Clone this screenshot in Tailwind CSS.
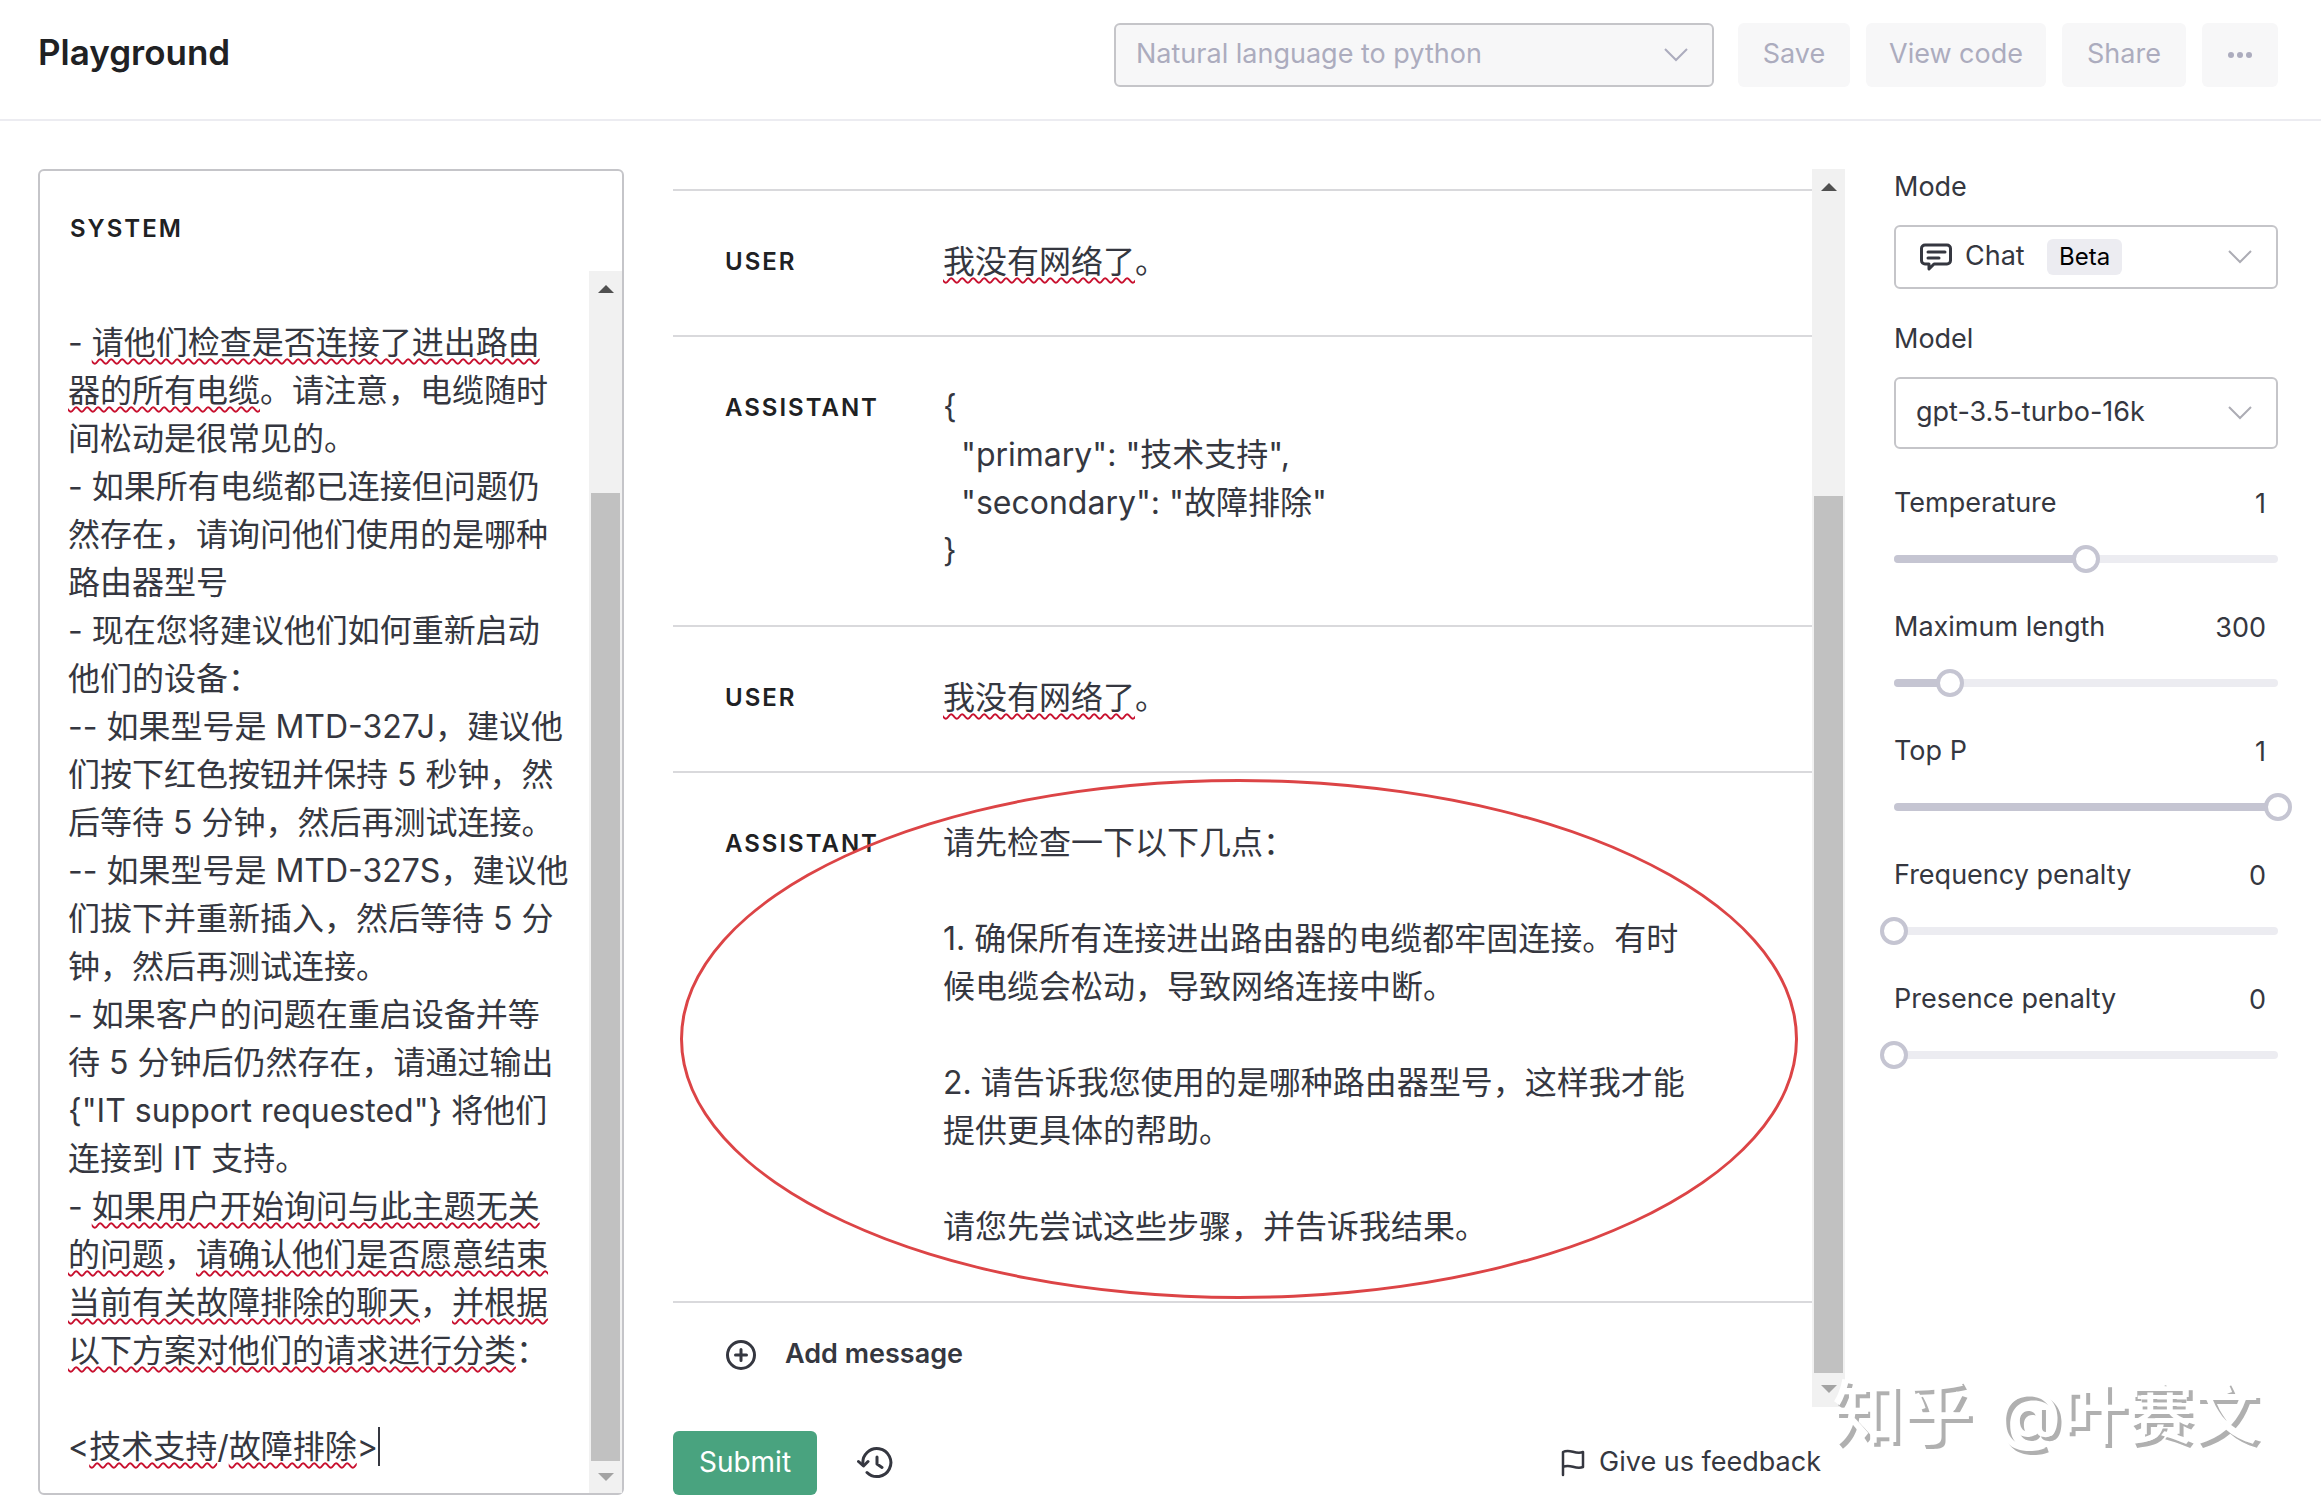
<!DOCTYPE html>
<html lang="zh-CN">
<head>
  <meta charset="UTF-8">
  <meta name="viewport" content="width=device-width, initial-scale=1.0">
  <title>Playground</title>
  <script src="https://cdn.jsdelivr.net/npm/@tailwindcss/browser@4"></script>
</head>
<body class="flex min-h-screen flex-col bg-white font-['Inter','Noto_Sans_CJK_SC',sans-serif] text-[27px] leading-9 text-[#353740]">

  <!-- Header -->
  <header class="flex items-center justify-between border-b-2 border-[#ececf1] pt-[23px] pr-[43px] pb-8 pl-[38px]">
    <h1 class="pb-1.5 text-[35px] font-semibold text-[#202123]">Playground</h1>
    <div class="flex gap-4 text-[#acacbe]">
      <div class="relative mr-2 w-[600px]">
        <select aria-label="Preset" class="h-16 w-full appearance-none rounded-md border-2 border-[#c5c5c9] bg-[#f7f7f8] px-5 pb-0.5 opacity-100" disabled>
          <option>Natural language to python</option>
        </select>
        <svg class="pointer-events-none absolute top-6 right-[26px] h-4 w-6" viewBox="0 0 24 16" fill="none" stroke="currentColor" stroke-width="2"><path d="M1 2l11 11L23 2"/></svg>
      </div>
      <button class="h-16 w-28 rounded-md bg-[#f7f7f8] pb-0.5">Save</button>
      <button class="h-16 w-45 rounded-md bg-[#f7f7f8] pb-0.5">View code</button>
      <button class="h-16 w-31 rounded-md bg-[#f7f7f8] pb-0.5">Share</button>
      <button class="h-16 w-19 rounded-md bg-[#f7f7f8]" aria-label="More">
        <svg class="mx-auto w-7" viewBox="0 0 28 8" fill="currentColor"><circle cx="5" cy="4" r="3"/><circle cx="14" cy="4" r="3"/><circle cx="23" cy="4" r="3"/></svg>
      </button>
    </div>
  </header>

  <main class="grid grow grid-cols-[1fr_2fr_384px] gap-[49px] pt-12 pr-[43px] pb-[18px] pl-[38px]">

    <!-- System prompt -->
    <section class="flex min-w-0 flex-col rounded-md border-2 border-[#c5c5c9]">
      <h2 id="system-label" class="px-[30px] pt-9 pb-5 text-2xl leading-[44px] font-semibold tracking-[2px] text-[#202123]">SYSTEM</h2>
      <div class="flex grow">
        <div role="textbox" aria-multiline="true" aria-labelledby="system-label" contenteditable="true" spellcheck="false" class="min-w-0 grow pl-7 text-[32px] leading-[48px] whitespace-pre outline-none">
- <u class="decoration-[#c8102e] decoration-wavy decoration-2 underline-offset-4">请他们检查是否连接了进出路由</u>
<u class="decoration-[#c8102e] decoration-wavy decoration-2 underline-offset-4">器的所有电缆</u>。请注意，电缆随时
间松动是很常见的。
- 如果所有电缆都已连接但问题仍
然存在，请询问他们使用的是哪种
路由器型号
- 现在您将建议他们如何重新启动
他们的设备：
-- 如果型号是 MTD-327J，建议他
们按下红色按钮并保持 5 秒钟，然
后等待 5 分钟，然后再测试连接。
-- 如果型号是 MTD-327S，建议他
们拔下并重新插入，然后等待 5 分
钟，然后再测试连接。
- 如果客户的问题在重启设备并等
待 5 分钟后仍然存在，请通过输出
{"IT support requested"} 将他们
连接到 IT 支持。
- <u class="decoration-[#c8102e] decoration-wavy decoration-2 underline-offset-4">如果用户开始询问与此主题无关</u>
<u class="decoration-[#c8102e] decoration-wavy decoration-2 underline-offset-4">的问题</u>，<u class="decoration-[#c8102e] decoration-wavy decoration-2 underline-offset-4">请确认他们是否愿意结束</u>
<u class="decoration-[#c8102e] decoration-wavy decoration-2 underline-offset-4">当前有关故障排除的聊天</u>，<u class="decoration-[#c8102e] decoration-wavy decoration-2 underline-offset-4">并根据</u>
<u class="decoration-[#c8102e] decoration-wavy decoration-2 underline-offset-4">以下方案对他们的请求进行分类</u>：

&lt;<u class="decoration-[#c8102e] decoration-wavy decoration-2 underline-offset-4">技术支持</u>/<u class="decoration-[#c8102e] decoration-wavy decoration-2 underline-offset-4">故障排除</u>&gt;<span class="border-r-2 border-[#353740]"></span></div>
        <div class="flex w-[33px] flex-col items-center bg-[#f1f1f1]">
          <svg class="mt-3.5 h-2 w-4" viewBox="0 0 16 8" fill="#505050"><path d="M0 8L8 0l8 8z"/></svg>
          <div class="mt-[200px] w-[29px] grow bg-[#c1c1c1]"></div>
          <svg class="my-3 h-2 w-4" viewBox="0 0 16 8" fill="#a3a3a3"><path d="M0 0l8 8 8-8z"/></svg>
        </div>
      </div>
    </section>

    <!-- Conversation -->
    <section class="flex min-w-0 flex-col">
      <div class="flex grow">
        <div class="grow pt-5">
          <div class="flex border-t-2 border-[#d9d9dc] pt-[46px] pb-12 pl-[52px]">
            <h3 id="m1-label" class="w-[218px] text-2xl leading-[50px] font-semibold tracking-[2px] text-[#202123]">USER</h3>
            <div role="textbox" aria-labelledby="m1-label" contenteditable="true" spellcheck="false" class="grow text-[32px] leading-[50px] outline-none"><u class="decoration-[#c8102e] decoration-wavy decoration-2 underline-offset-4">我没有网络了</u>。</div>
          </div>
          <div class="flex border-t-2 border-[#d9d9dc] pt-[46px] pb-[50px] pl-[52px]">
            <label for="m2" class="w-[218px] text-2xl leading-[50px] font-semibold tracking-[2px] text-[#202123]">ASSISTANT</label>
            <textarea id="m2" rows="4" spellcheck="false" class="block grow resize-none overflow-hidden text-[32px] leading-[48px] outline-none">{
  "primary": "技术支持",
  "secondary": "故障排除"
}</textarea>
          </div>
          <div class="flex border-t-2 border-[#d9d9dc] pt-[46px] pb-12 pl-[52px]">
            <h3 id="m3-label" class="w-[218px] text-2xl leading-[50px] font-semibold tracking-[2px] text-[#202123]">USER</h3>
            <div role="textbox" aria-labelledby="m3-label" contenteditable="true" spellcheck="false" class="grow text-[32px] leading-[50px] outline-none"><u class="decoration-[#c8102e] decoration-wavy decoration-2 underline-offset-4">我没有网络了</u>。</div>
          </div>
          <div class="relative flex border-y-2 border-[#d9d9dc] pt-[46px] pb-[50px] pl-[52px]">
            <label for="m4" class="w-[218px] text-2xl leading-[50px] font-semibold tracking-[2px] text-[#202123]">ASSISTANT</label>
            <textarea id="m4" rows="9" spellcheck="false" class="block grow resize-none overflow-hidden text-[32px] leading-[48px] whitespace-pre outline-none">请先检查一下以下几点：

1. 确保所有连接进出路由器的电缆都牢固连接。有时
候电缆会松动，导致网络连接中断。

2. 请告诉我您使用的是哪种路由器型号，这样我才能
提供更具体的帮助。

请您先尝试这些步骤，并告诉我结果。</textarea>
            <div class="pointer-events-none absolute top-1.5 right-3.5 bottom-0.5 left-[7px] rounded-[50%] border-3 border-[#dc4446]"></div>
          </div>
          <button class="flex h-[104px] w-full items-center gap-7 pl-[52px] font-semibold">
            <svg class="size-8" viewBox="0 0 32 32" fill="none" stroke="currentColor" stroke-width="3" stroke-linecap="round"><circle cx="16" cy="16" r="13.5"/><path d="M16 10.500v11M10.500 16h11"/></svg>
            <span class="pb-0.5">Add message</span>
          </button>
        </div>
        <div class="flex w-[33px] flex-col items-center bg-[#f1f1f1]">
          <svg class="mt-3.5 h-2 w-4" viewBox="0 0 16 8" fill="#505050"><path d="M0 8L8 0l8 8z"/></svg>
          <div class="mt-[305px] w-[29px] grow bg-[#c1c1c1]"></div>
          <svg class="mt-3 mb-3.5 h-2 w-4" viewBox="0 0 16 8" fill="#a3a3a3"><path d="M0 0l8 8 8-8z"/></svg>
        </div>
      </div>
      <div class="mt-6 flex items-center">
        <button class="h-16 w-36 rounded-md bg-[#49a37f] pb-0.5 text-[28px] text-white">Submit</button>
        <button class="ml-10" aria-label="History">
          <svg class="h-8 w-9" viewBox="0 0 36 32" fill="none" stroke="currentColor" stroke-width="3" stroke-linecap="round" stroke-linejoin="round"><path d="M6 17.500A14 14 0 1 1 10 25.500"/><path d="M1.500 14.500l5 4.500 4.500-4.500M20 10v7l5 3.500"/></svg>
        </button>
        <a href="#" class="ml-auto flex items-center gap-3.5 pr-6">
          <svg class="h-7 w-6" viewBox="0 0 24 28" fill="none" stroke="currentColor" stroke-width="2.500" stroke-linecap="round" stroke-linejoin="round"><path d="M2 26V3c7-4 12 3 20 0v15c-8 3-13-4-20 0"/></svg>
          <span class="pb-0.5">Give us feedback</span>
        </a>
      </div>
    </section>

    <!-- Settings -->
    <aside class="flex flex-col">
      <label for="mode" class="mb-5">Mode</label>
      <div class="relative">
        <select id="mode" class="h-16 w-full appearance-none rounded-md border-2 border-[#c5c5c9] bg-white pb-0.5 pl-[69px]">
          <option>Chat</option>
          <option>Complete</option>
        </select>
        <div class="pointer-events-none absolute inset-0 flex items-center px-[26px]">
          <svg class="h-7 w-8" viewBox="0 0 32 28" fill="none" stroke="currentColor" stroke-width="3" stroke-linecap="round" stroke-linejoin="round"><path d="M5 2h22a3.500 3.500 0 0 1 3.500 3.500v12A3.500 3.500 0 0 1 27 21H14l-5 5v-5H5a3.500 3.500 0 0 1-3.500-3.500v-12A3.500 3.500 0 0 1 5 2z"/><path d="M8 9h17M8 15h11"/></svg>
          <span class="ml-[95px] rounded-md bg-[#ececf1] px-3 text-2xl leading-9 text-black">Beta</span>
          <svg class="ml-auto h-4 w-6 text-[#acacb4]" viewBox="0 0 24 16" fill="none" stroke="currentColor" stroke-width="2"><path d="M1 2l11 11L23 2"/></svg>
        </div>
      </div>

      <label for="model" class="mt-8 mb-5">Model</label>
      <div class="relative">
        <select id="model" class="h-[72px] w-full appearance-none rounded-md border-2 border-[#c5c5c9] bg-white px-5 pb-0.5">
          <option>gpt-3.5-turbo-16k</option>
        </select>
        <svg class="pointer-events-none absolute top-7 right-[26px] h-4 w-6 text-[#acacb4]" viewBox="0 0 24 16" fill="none" stroke="currentColor" stroke-width="2"><path d="M1 2l11 11L23 2"/></svg>
      </div>

      <div id="sliders" class="mt-[34px] flex flex-col gap-[34px]"></div>
    </aside>
  </main>

  <!-- Watermark -->
  <div class="pointer-events-none absolute right-[62px] bottom-[50px] flex items-center gap-6 text-[66px] leading-[96px] font-medium text-white [text-shadow:4px_4px_0_#b0b0b0]">
    <span class="text-[70px]">知乎</span><span>@叶赛文</span>
  </div>

  <script>
    const settings = [
      { id: 'temperature', label: 'Temperature', value: 1, max: 2, step: 0.01 },
      { id: 'max-length', label: 'Maximum length', value: 300, max: 2048, step: 1 },
      { id: 'top-p', label: 'Top P', value: 1, max: 1, step: 0.01 },
      { id: 'frequency', label: 'Frequency penalty', value: 0, max: 2, step: 0.01 },
      { id: 'presence', label: 'Presence penalty', value: 0, max: 2, step: 0.01 }
    ];

    settings.forEach(s => {
      const row = document.createElement('div');
      row.innerHTML = `
        <div class="flex items-center justify-between">
          <label for="${s.id}">${s.label}</label>
          <input id="${s.id}" value="${s.value}" class="h-10 w-24 pr-3 text-right outline-none">
        </div>
        <div class="relative mt-[22px] flex h-7 items-center">
          <div class="h-2 w-full overflow-hidden rounded-full bg-[#ececf1]">
            <div class="fill h-full bg-[#c5c5d2]" style="width: ${s.value / s.max * 100}%"></div>
          </div>
          <input type="range" aria-label="${s.label}" min="0" max="${s.max}" step="${s.step}" value="${s.value}" class="absolute -inset-x-3.5 h-7 appearance-none bg-transparent [&::-webkit-slider-thumb]:size-7 [&::-webkit-slider-thumb]:appearance-none [&::-webkit-slider-thumb]:rounded-full [&::-webkit-slider-thumb]:border-4 [&::-webkit-slider-thumb]:border-solid [&::-webkit-slider-thumb]:border-[#c5c5d2] [&::-webkit-slider-thumb]:bg-white">
        </div>`;
      const range = row.querySelector('input[type=range]');
      range.addEventListener('input', () => {
        row.querySelector('.fill').style.width = range.value / s.max * 100 + '%';
        row.querySelector('input').value = range.value;
      });
      document.getElementById('sliders').appendChild(row);
    });
  </script>
</body>
</html>
